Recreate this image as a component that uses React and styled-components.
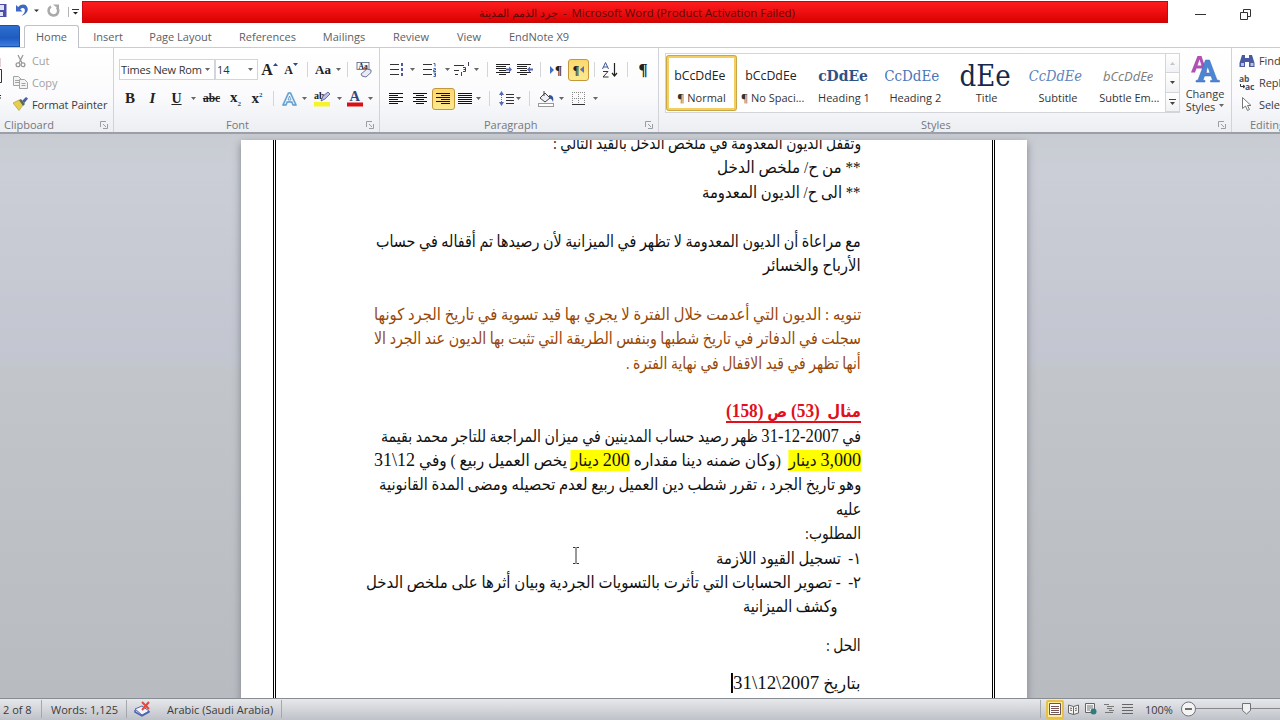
import React, { useLayoutEffect, useRef, useState } from 'react';
import styled, { createGlobalStyle, css } from 'styled-components';

const GlobalStyle = createGlobalStyle`
  * {
    box-sizing: border-box;
  }
  body {
    margin: 0;
    overflow: hidden;
    font-family: 'Open Sans', 'Noto Sans', sans-serif;
    font-size: 11px;
    color: #3b3b3b;
  }
  svg {
    display: block;
    flex: none;
  }
`;

const Window = styled.div`
  display: flex;
  flex-direction: column;
  width: 1280px;
  height: 720px;
  overflow: hidden;
  background: #fff;
`;

/* ---------- title bar ---------- */

const TitleBar = styled.div`
  display: flex;
  height: 25px;
  flex: none;
`;

const QuickAccess = styled.div`
  width: 82px;
  height: 23px;
`;

const Caption = styled.div`
  width: 1086px;
  height: 22px;
  margin-top: 1px;
  padding-left: 396px;
  border: 1px solid #c40a0a;
  border-top-color: #a51414;
  background: linear-gradient(#fb1d1d, #ee0f10 50%, #d90000);
  color: #5c0b0b;
  font-size: 11.4px;
  line-height: 22px;
  display: flex;
  gap: 5px;
  white-space: nowrap;
`;

const WindowButtons = styled.div`
  display: flex;
  align-items: center;
  gap: 34px;
  padding: 3px 0 0 27px;
`;

/* ---------- ribbon tabs ---------- */

const Tabs = styled.div`
  display: flex;
  height: 23px;
  flex: none;
  border-bottom: 1px solid #c9cdd2;
`;

const FileTab = styled.div`
  width: 20px;
  height: 22px;
  margin-right: 4px;
  border-radius: 0 3px 0 0;
  background: linear-gradient(#2e6fd0, #1f5bc0 60%, #3a7de0);
  border: 1px solid #1d51a8;
  border-left: none;
`;

const Tab = styled.div`
  width: ${(p) => p.$w}px;
  height: 23px;
  text-align: center;
  line-height: 23px;
  color: #5d6064;
  white-space: nowrap;
  ${(p) =>
    p.$active &&
    css`
      background: #fff;
      border: 1px solid #bfc3c9;
      border-bottom: none;
      border-radius: 3px 3px 0 0;
      line-height: 21px;
    `}
`;

/* ---------- ribbon ---------- */

const Ribbon = styled.div`
  display: flex;
  height: 86px;
  flex: none;
  background: linear-gradient(#fff, #fbfbfd 55%, #eceef2);
  border-bottom: 2px solid #9a9fa8;
`;

const Group = styled.div`
  width: ${(p) => p.$w}px;
  flex: none;
  display: flex;
  flex-direction: column;
  border-right: 1px solid #d0d3d8;
`;

const GroupBody = styled.div`
  height: 68px;
  padding: ${(p) => p.$pad || '0'};
  display: flex;
  flex-direction: ${(p) => (p.$row ? 'row' : 'column')};
`;

const GroupFoot = styled.div`
  display: flex;
  align-items: center;
  justify-content: space-between;
  height: 16px;
  padding: 1px 5px 0 ${(p) => p.$x}px;
  color: #74787e;
  white-space: nowrap;
`;

const ToolRow = styled.div`
  display: flex;
  align-items: center;
  height: 23px;
  margin-top: ${(p) => p.$mt || 0}px;
`;

const Cell = styled.div`
  display: flex;
  align-items: center;
  justify-content: center;
  width: ${(p) => p.$w}px;
  height: 22px;
  flex: none;
  ${(p) =>
    p.$on &&
    css`
      border: 1px solid #c2983a;
      border-radius: 3px;
      background: linear-gradient(#fbd86b, #fbe083 50%, #fdea8e);
    `}
`;

const Divider = styled.span`
  width: 1px;
  height: 15px;
  background: #d3d5d9;
`;

const Combo = styled.div`
  display: flex;
  align-items: center;
  justify-content: space-between;
  width: ${(p) => p.$w}px;
  height: 21px;
  padding: 0 4px 0 1px;
  border: 1px solid #d2d5da;
  background: #fff;
  color: #333;
  letter-spacing: -0.15px;
  white-space: nowrap;
`;

const Glyph = styled.span`
  font-family: 'Liberation Serif', serif;
  font-size: ${(p) => p.$size || 16}px;
  font-weight: ${(p) => (p.$bold ? 700 : 400)};
  font-style: ${(p) => (p.$italic ? 'italic' : 'normal')};
  text-decoration: ${(p) => p.$line || 'none'};
  line-height: 1;
  color: #222;
  white-space: nowrap;

  small {
    font-size: 7px;
    color: #2d4a86;
    vertical-align: ${(p) => p.$script || 'baseline'};
  }
`;

const Command = styled.div`
  display: flex;
  align-items: center;
  height: 21.8px;
  gap: 4px;
  letter-spacing: -0.1px;
  color: ${(p) => (p.$off ? '#a1a1a1' : '#3b3b3b')};
  white-space: nowrap;
`;

const CommandList = styled.div`
  padding-top: 2px;
`;

const PasteEdge = styled.div`
  width: 13px;
  height: 68px;
`;

/* ---------- style gallery ---------- */

const Gallery = styled.div`
  display: flex;
  width: 515px;
  height: 60px;
  border: 1px solid #d3d5da;
  background: #fff;
`;

const StyleItem = styled.div`
  display: flex;
  flex-direction: column;
  align-items: center;
  width: ${(p) => (p.$selected ? 71 : 71.4)}px;
  height: 56px;
  margin-top: 1px;
  border: 3px solid ${(p) => (p.$selected ? '#f3cf62' : 'transparent')};
  border-radius: 3px;
  outline: ${(p) => (p.$selected ? '1px solid #c9a747' : 'none')};
  outline-offset: -1px;
`;

const Sample = styled.div`
  display: flex;
  align-items: center;
  justify-content: flex-end;
  width: 54px;
  height: 34px;
  margin-right: 6px;
  padding-top: 1px;
  overflow: hidden;
  white-space: nowrap;
  line-height: 30px;
  color: ${(p) => p.$color || '#222'};
  font-family: ${(p) =>
    p.$serif ? "'DejaVu Serif Condensed', 'DejaVu Serif', serif" : "'Open Sans', sans-serif"};
  font-stretch: ${(p) => (p.$serif ? 'condensed' : 'normal')};
  font-size: ${(p) => p.$size || 12.3}px;
  font-weight: ${(p) => (p.$bold ? 700 : 400)};
  font-style: ${(p) => (p.$italic ? 'italic' : 'normal')};
`;

const SampleName = styled.div`
  line-height: 12px;
  white-space: nowrap;
  color: #333;
`;

const Scroller = styled.div`
  width: 14px;
  margin-left: auto;
  border-left: 1px solid #d3d5da;
  display: flex;
  flex-direction: column;
`;

const ScrollButton = styled.div`
  flex: 1;
  display: flex;
  align-items: center;
  justify-content: center;
  background: linear-gradient(#fff, #f1f2f4);
  border-bottom: 1px solid #d3d5da;
`;

const ChangeStyles = styled.div`
  width: 50px;
  display: flex;
  flex-direction: column;
  align-items: center;
  line-height: 13px;
  text-align: center;
  white-space: nowrap;

  svg {
    margin-bottom: 2px;
  }

  div {
    display: flex;
    align-items: center;
    gap: 4px;
  }
`;

/* ---------- document ---------- */

const Workspace = styled.div`
  position: relative;
  flex: 1;
  overflow: hidden;
  padding: 6px 0 0 241px;
  background: linear-gradient(#c8ccd2, #cbced6 6%, #c3c6d0 40%, #c2c6ca 42%, #b8bbc0);
`;

const Page = styled.div`
  width: 786px;
  height: 600px;
  padding: 0 32px;
  background: #fff;
  box-shadow: 0 3px 8px 0 #80848b;
`;

const PageBorder = styled.div`
  height: 600px;
  border-left: 3px double #000;
  border-right: 3px double #000;
  padding-right: 131px;
  overflow: hidden;
`;

const Text = styled.div`
  direction: rtl;
  margin-top: -8px;
  color: #111;
  font-family: 'Liberation Serif', 'DejaVu Sans', serif;
  font-size: 16.6px;
`;

const Line = styled.div`
  height: 24.4px;
  line-height: 24.4px;
  margin-top: ${(p) => p.$mt || 0}px;
  padding-right: ${(p) => p.$indent || 0}px;
  color: ${(p) => p.$color || 'inherit'};
  font-weight: ${(p) => (p.$bold ? 700 : 400)};
  white-space: nowrap;
`;

const Fitted = styled.span`
  display: inline-block;
  height: ${(p) => (p.$underline ? '23px' : 'auto')};
  white-space: pre;
  transform-origin: 100% 50%;
  border-bottom: ${(p) => (p.$underline ? '2px solid #e0101c' : 'none')};
`;

const Num = styled.span`
  font-size: 19.4px;
  line-height: 1;
`;

const Mark = styled.span`
  padding: 1px 0;
  background: #ffff00;
`;

const Caret = styled.span`
  display: inline-block;
  width: 2px;
  height: 20px;
  background: #000;
  vertical-align: -4px;
`;

const Pointer = styled.div`
  position: absolute;
  left: 572px;
  top: 413px;
`;

/* ---------- status bar ---------- */

const StatusBar = styled.div`
  display: flex;
  align-items: center;
  height: 22px;
  flex: none;
  padding-bottom: 1px;
  border-top: 1px solid #888c93;
  background: linear-gradient(#e6e8eb, #d3d5da 50%, #bfc2c8);
  white-space: nowrap;
`;

const StatusItem = styled.div`
  display: flex;
  align-items: center;
  width: ${(p) => p.$w}px;
  height: 18px;
  padding-left: ${(p) => p.$pl || 0}px;
  flex: none;
  border-right: ${(p) => (p.$edge ? '1px solid #a4a8ae' : 'none')};
`;

const ViewButton = styled.div`
  display: flex;
  align-items: center;
  justify-content: center;
  width: 18px;
  height: 19px;
  flex: none;
  ${(p) =>
    p.$on &&
    css`
      background: #fdeb9c;
      border: 2px solid #e5c04a;
      border-radius: 2px;
    `}
`;

const Arrow = ({ color = '#666' }) => (
  <svg width="5" height="3" viewBox="0 0 5 3">
    <path d="M0 0h5L2.5 3z" fill={color} />
  </svg>
);

const Launcher = () => (
  <svg width="8" height="8" viewBox="0 0 8 8" fill="none" stroke="#9a9da3">
    <path d="M.5 6V.5H6M3 3l3 3M7.5 3v4.5H3" />
  </svg>
);

const Sep = ({ w }) => (
  <Cell $w={w}>
    <Divider />
  </Cell>
);

const Drop = ({ w }) => (
  <Cell $w={w}>
    <Arrow />
  </Cell>
);

// horizontal text lines; each entry is [x, width]
const Bars = ({ rows, w = 15, step = 2, color = '#111' }) => (
  <svg width={w} height={rows.length * step} viewBox={`0 0 ${w} ${rows.length * step}`}>
    {rows.map(([x, len], i) => (
      <rect key={i} x={x} y={i * step} width={len} height="1" fill={color} />
    ))}
  </svg>
);

const LEFT = [[0, 14], [0, 9], [0, 14], [0, 9], [0, 14], [0, 9]];
const CENTER = [[0, 14], [3, 8], [0, 14], [3, 8], [0, 14], [3, 8]];
const RIGHT = [[0, 14], [5, 9], [0, 14], [5, 9], [0, 14], [5, 9]];
const FULL = [[0, 14], [0, 14], [0, 14], [0, 14], [0, 14], [0, 14]];

const Indent = ({ flip }) => (
  <svg width="16" height="12" viewBox="0 0 16 12">
    <path d="M0 .5h14M0 2.5h9M0 4.5h9M3 6.5h6M0 8.5h14M3 10.5h6" stroke="#222" />
    <path d="M9.5 0v12" stroke="#222" strokeDasharray="1 1" />
    <path d={flip ? 'M10 5.5l3-3v2h3v2h-3v2z' : 'M16 5.5l-3-3v2h-3v2h3v2z'} fill="#5b66b5" />
  </svg>
);

function FitText({ width, children, ...rest }) {
  const ref = useRef(null);
  const [scale, setScale] = useState(1);

  useLayoutEffect(() => {
    setScale(width / ref.current.offsetWidth);
  }, [width]);

  return (
    <Fitted ref={ref} style={{ transform: `scaleX(${scale})` }} {...rest}>
      {children}
    </Fitted>
  );
}

const BROWN = '#974706';

const lines = [
  { w: 308, text: 'وتقفل الديون المعدومة في ملخص الدخل بالقيد التالي :' },
  { w: 144, text: '** من ح/ ملخص الدخل' },
  { w: 159, text: '** الى ح/ الديون المعدومة' },
  {},
  { w: 485, text: 'مع مراعاة أن الديون المعدومة لا تظهر في الميزانية لأن رصيدها تم أقفاله في حساب' },
  { w: 98, text: 'الأرباح والخسائر' },
  {},
  { w: 487, color: BROWN, text: 'تنويه : الديون التي أعدمت خلال الفترة لا يجري بها قيد تسوية في تاريخ الجرد كونها' },
  { w: 487, color: BROWN, text: 'سجلت في الدفاتر في تاريخ شطبها وبنفس الطريقة التي تثبت بها الديون عند الجرد الا' },
  { w: 235, color: BROWN, text: 'أنها تظهر في قيد الاقفال في نهاية الفترة .' },
  {},
  {
    w: 135,
    color: '#e0101c',
    bold: true,
    underline: true,
    text: (
      <>
        {'مثال  '}
        <Num>(53)</Num>
        {' ص '}
        <Num>(158)</Num>
      </>
    ),
  },
  {
    w: 480,
    text: (
      <>
        {'في '}
        <Num>2007-12-31</Num>
        {' ظهر رصيد حساب المدينين في ميزان المراجعة للتاجر محمد بقيمة'}
      </>
    ),
  },
  {
    w: 487,
    text: (
      <>
        <Mark>
          <Num>3,000</Num> دينار
        </Mark>
        {'  (وكان ضمنه دينا مقداره '}
        <Mark>
          <Num>200</Num> دينار
        </Mark>
        {' يخص العميل ربيع ) وفي '}
        <Num>{'12\\31'}</Num>
      </>
    ),
  },
  { w: 482, text: 'وهو تاريخ الجرد ، تقرر شطب دين العميل ربيع لعدم تحصيله ومضى المدة القانونية' },
  { w: 25, text: 'عليه' },
  { w: 56, text: 'المطلوب:' },
  { w: 145, text: '١-  تسجيل القيود اللازمة' },
  { w: 495, text: '٢-  - تصوير الحسابات التي تأثرت بالتسويات الجردية وبيان أثرها على ملخص الدخل' },
  { w: 95, indent: 23, text: 'وكشف الميزانية' },
  { w: 35, mt: 14, text: 'الحل :' },
  {
    w: 130,
    mt: 14,
    text: (
      <>
        {'بتاريخ '}
        <Num>{'2007\\12\\31'}</Num>
        <Caret />
      </>
    ),
  },
];

const tabs = [
  ['Home', 55],
  ['Insert', 58],
  ['Page Layout', 87],
  ['References', 87],
  ['Mailings', 66],
  ['Review', 68],
  ['View', 48],
  ['EndNote X9', 92],
];

const styles = [
  { name: '¶ Normal', sample: 'bCcDdEe', selected: true },
  { name: '¶ No Spaci...', sample: 'bCcDdEe' },
  { name: 'Heading 1', sample: 'cDdEe', serif: true, bold: true, color: '#2f5284', size: 15.5 },
  { name: 'Heading 2', sample: 'CcDdEe', serif: true, color: '#4a76b8', size: 15 },
  { name: 'Title', sample: 'dEe', serif: true, color: '#14294b', size: 29 },
  { name: 'Subtitle', sample: 'CcDdEe', serif: true, italic: true, color: '#5d84bd', size: 14.5 },
  { name: 'Subtle Em...', sample: 'bCcDdEe', italic: true, color: '#7c7c7c', size: 13 },
];

function ClipboardGroup() {
  return (
    <Group $w={114}>
      <GroupBody $row>
        <PasteEdge>
          <svg width="13" height="68" viewBox="0 0 13 68">
            <path d="M0 10v9" stroke="#c9a5a5" />
            <path d="M0 21.5h1.5v13H0" fill="none" stroke="#334" />
            <path d="M0 47.5h1M0 50h1" stroke="#222" />
          </svg>
        </PasteEdge>
        <CommandList>
          <Command $off>
            <svg width="15" height="14" viewBox="0 0 15 14" fill="none" stroke="#9a9a9a" strokeWidth="1.3">
              <path d="M5 1l4 8M10 1L6 9" />
              <circle cx="5" cy="10.8" r="1.9" />
              <circle cx="10" cy="10.8" r="1.9" />
            </svg>
            Cut
          </Command>
          <Command $off>
            <svg width="15" height="13" viewBox="0 0 15 13" fill="#f4f4f4" stroke="#a3a3a3">
              <path d="M.5.5h5l3 3v6h-8z" />
              <path d="M2 4.5h4M2 6.5h4" />
              <path d="M6.5 3.5h5l3 3v6h-8z" />
              <path d="M8.5 7.5h4M8.5 9.5h4" />
            </svg>
            Copy
          </Command>
          <Command>
            <svg width="15" height="14" viewBox="0 0 15 14">
              <path d="M0 6l6-3 4 5-4 5.5z" fill="#e6cf4c" stroke="#a5913b" strokeWidth=".6" />
              <path d="M6 3l2-1 4 5-2 2z" fill="#5d6e50" />
              <path d="M9 4l4-4 2 1.5L11.5 6z" fill="#4b5fa0" />
            </svg>
            Format Painter
          </Command>
        </CommandList>
      </GroupBody>
      <GroupFoot $x={4}>
        Clipboard
        <Launcher />
      </GroupFoot>
    </Group>
  );
}

function FontGroup() {
  return (
    <Group $w={266}>
      <GroupBody $pad="10px 0 0 5px">
        <ToolRow>
          <Combo $w={96}>
            Times New Rom <Arrow />
          </Combo>
          <Combo $w={43}>
            14 <Arrow />
          </Combo>
          <Cell $w={23}>
            <Glyph $bold $size={16}>A</Glyph>
            <svg width="5" height="14" viewBox="0 0 5 14"><path d="M0 3h5L2.5 0z" fill="#2f478a" /></svg>
          </Cell>
          <Cell $w={20}>
            <Glyph $bold $size={12}>A</Glyph>
            <svg width="5" height="14" viewBox="0 0 5 14"><path d="M0 0h5L2.5 3z" fill="#2f478a" /></svg>
          </Cell>
          <Sep w={12} />
          <Cell $w={20}>
            <Glyph $bold $size={13}>Aa</Glyph>
          </Cell>
          <Drop w={10} />
          <Sep w={8} />
          <Cell $w={26}>
            <svg width="17" height="16" viewBox="0 0 17 16">
              <rect x="1" y=".5" width="12" height="7" fill="#fff" stroke="#55607c" strokeWidth=".8" />
              <text x="2.5" y="6.8" fontSize="7.5" fontWeight="700" fontFamily="Liberation Serif" fill="#223">Aa</text>
              <path d="M5 12l6-5 4 1v2.500l-5 4.500-4-1z" fill="#e8ebf6" stroke="#5b678c" strokeWidth=".9" />
            </svg>
          </Cell>
        </ToolRow>
        <ToolRow $mt={6}>
          <Cell $w={22}><Glyph $bold $size={15}>B</Glyph></Cell>
          <Cell $w={23}><Glyph $bold $italic $size={15}>I</Glyph></Cell>
          <Cell $w={25}><Glyph $bold $size={14} $line="underline">U</Glyph></Cell>
          <Drop w={8} />
          <Cell $w={29}><Glyph $bold $size={11.5} $line="line-through">abc</Glyph></Cell>
          <Cell $w={19}><Glyph $bold $size={15} $script="sub">x<small>2</small></Glyph></Cell>
          <Cell $w={24}><Glyph $bold $size={15} $script="super">x<small>2</small></Glyph></Cell>
          <Sep w={9} />
          <Cell $w={23}>
            <svg width="15" height="14" viewBox="0 0 15 14" fill="none">
              <path d="M1 13L6.5 1h2L14 13h-3l-1.2-3H5.2L4 13z" stroke="#9cc8ea" strokeWidth="2" />
              <path d="M1 13L6.5 1h2L14 13h-3l-1.2-3H5.2L4 13zM6 8h3L7.5 4z" stroke="#4384bd" strokeWidth=".7" />
            </svg>
          </Cell>
          <Drop w={6} />
          <Cell $w={30}>
            <svg width="17" height="16" viewBox="0 0 17 16">
              <rect x="0" y="11" width="16" height="4.5" fill="#f7f32a" />
              <text x="0" y="8" fontSize="10" fontWeight="700" fontFamily="Liberation Serif" fill="#222">ab</text>
              <path d="M7 10l2-5 5-4 2 2-5 5z" fill="#b9c2e2" stroke="#46549a" strokeWidth=".8" />
            </svg>
          </Cell>
          <Drop w={5} />
          <Cell $w={25}>
            <svg width="16" height="16" viewBox="0 0 16 16">
              <rect x="0" y="11.5" width="16" height="4" fill="#dc0f14" />
              <text x="2.5" y="10.3" fontSize="14.5" fontWeight="700" fontFamily="Liberation Serif" fill="#31487d">A</text>
            </svg>
          </Cell>
          <Drop w={6} />
        </ToolRow>
      </GroupBody>
      <GroupFoot $x={112}>
        Font
        <Launcher />
      </GroupFoot>
    </Group>
  );
}

function ParagraphGroup() {
  return (
    <Group $w={279}>
      <GroupBody $pad="10px 0 0 4px">
        <ToolRow>
          <Cell $w={25}>
            <svg width="14" height="13" viewBox="0 0 14 13">
              <path d="M0 1.5h9M0 6.5h9M0 11.5h9" stroke="#333" />
              <path d="M11 0h2v3h-2zM11 5h2v3h-2zM11 10h2v3h-2z" fill="#4a5c9c" />
            </svg>
          </Cell>
          <Drop w={7} />
          <Cell $w={28}>
            <svg width="14" height="14" viewBox="0 0 14 14" fill="none">
              <path d="M0 1.5h9M0 6.5h9M0 11.5h9" stroke="#333" />
              <path d="M10.5 .5h1.500v3M10.500 5.500h2v1.500h-2v1.500h2.500M10.500 10h2v3.500h-2M11 11.700h1.500" stroke="#3d62ad" />
            </svg>
          </Cell>
          <Drop w={7} />
          <Cell $w={22}>
            <svg width="16" height="15" viewBox="0 0 16 15" fill="none">
              <path d="M0 3.5h10M0 8.5h5M1 12.5h3" stroke="#333" />
              <path d="M14.5 0v4M9 5.500h2.500v4H9M11.500 7.500H9.500M7.500 10v4" stroke="#33426f" />
            </svg>
          </Cell>
          <Drop w={7} />
          <Sep w={14} />
          <Cell $w={19}><Indent /></Cell>
          <Cell $w={23}><Indent flip /></Cell>
          <Sep w={8} />
          <Cell $w={24}>
            <svg width="5" height="8" viewBox="0 0 5 8"><path d="M0 0l4 4-4 4z" fill="#3e6fc0" /></svg>
            <Glyph $bold $size={13}>¶</Glyph>
          </Cell>
          <Cell $w={21} $on>
            <Glyph $bold $size={12}>¶</Glyph>
            <svg width="5" height="7" viewBox="0 0 5 7"><path d="M5 0L1 3.5 5 7z" fill="#5a6cc0" /></svg>
          </Cell>
          <Sep w={10} />
          <Cell $w={22}>
            <svg width="16" height="16" viewBox="0 0 16 16">
              <path d="M.5 7L3.500 .5 6.500 7M1.500 5h4" fill="none" stroke="#3e5596" />
              <path d="M1 9.500h5l-5 5.500h5.500" fill="none" stroke="#333" />
              <path d="M12.5 1v13M10 11l2.5 3 2.5-3" fill="none" stroke="#222" strokeWidth="1.2" />
            </svg>
          </Cell>
          <Sep w={12} />
          <Cell $w={20}><Glyph $bold $size={17}>¶</Glyph></Cell>
        </ToolRow>
        <ToolRow $mt={6}>
          <Cell $w={24}><Bars rows={LEFT} /></Cell>
          <Cell $w={24}><Bars rows={CENTER} /></Cell>
          <Cell $w={23} $on><Bars rows={RIGHT} /></Cell>
          <Cell $w={21}><Bars rows={FULL} /></Cell>
          <Drop w={5} />
          <Sep w={16} />
          <Cell $w={18}>
            <svg width="15" height="15" viewBox="0 0 15 15">
              <path d="M0 4l2.5-4L5 4zM0 11l2.5 4L5 11z" fill="#5967b4" />
              <path d="M2.5 4v7" stroke="#5967b4" strokeDasharray="1 1" />
              <path d="M7 3.5h8M7 6.5h8M7 9.5h8M7 12.5h8" stroke="#333" />
            </svg>
          </Cell>
          <Drop w={7} />
          <Sep w={14} />
          <Cell $w={21}>
            <svg width="17" height="16" viewBox="0 0 17 16">
              <rect x=".5" y="12.5" width="15" height="3" fill="#fff" stroke="#999" />
              <path d="M2 7l5-5 5 5-5 4z" fill="#eef1f8" stroke="#444" />
              <path d="M6 0v5" stroke="#444" />
              <path d="M11 4c4 0 5 3 4 7-1-3-2-3-4-4z" fill="#34529c" />
            </svg>
          </Cell>
          <Drop w={8} />
          <Cell $w={28}>
            <svg width="14" height="14" viewBox="0 0 14 14" fill="none" stroke="#888">
              <path d="M.5 0v13M6.5 0v13M12.5 0v13M0 .5h13M0 6.5h13" strokeDasharray="1 1" />
              <path d="M0 12.5h13" stroke="#333" />
            </svg>
          </Cell>
          <Drop w={4} />
        </ToolRow>
      </GroupBody>
      <GroupFoot $x={104}>
        Paragraph
        <Launcher />
      </GroupFoot>
    </Group>
  );
}

function StylesGroup() {
  return (
    <Group $w={573}>
      <GroupBody $row $pad="5px 0 0 6px">
        <Gallery>
          {styles.map((s) => (
            <StyleItem key={s.name} $selected={s.selected}>
              <Sample $serif={s.serif} $bold={s.bold} $italic={s.italic} $color={s.color} $size={s.size}>
                {s.sample}
              </Sample>
              <SampleName>{s.name}</SampleName>
            </StyleItem>
          ))}
          <Scroller>
            <ScrollButton>
              <svg width="5" height="3" viewBox="0 0 5 3"><path d="M0 3h5L2.5 0z" fill="#c4c6ca" /></svg>
            </ScrollButton>
            <ScrollButton><Arrow color="#444" /></ScrollButton>
            <ScrollButton>
              <svg width="7" height="6" viewBox="0 0 7 6"><path d="M0 0h7v1H0zM1 3h5L3.5 6z" fill="#444" /></svg>
            </ScrollButton>
          </Scroller>
        </Gallery>
        <ChangeStyles>
          <svg width="30" height="32" viewBox="0 0 30 32">
            <path d="M1 19.500L7.500 3h4L17 19.500h-3.500l-1.200-4H6.500L5 19.500zM7.500 12.500h4l-2-6z" fill="#b14fb5" />
            <path d="M6 29v-1.500l2-.5L15.500 7h4L27 27l2.500.5V29h-9v-1.500l2-.5-1.500-4h-6.500L13 27l2 .5V29zM15.500 20h4.500l-2.200-6.500z" fill="#4a86d4" stroke="#3a69b0" strokeWidth=".5" />
          </svg>
          Change
          <div>
            Styles <Arrow />
          </div>
        </ChangeStyles>
      </GroupBody>
      <GroupFoot $x={262}>
        Styles
        <Launcher />
      </GroupFoot>
    </Group>
  );
}

function EditingGroup() {
  return (
    <Group $w={90}>
      <GroupBody $pad="2px 0 0 7px">
        <Command>
          <svg width="16" height="14" viewBox="0 0 16 14">
            <path d="M3 1h3v3h4V1h3l2.500 8v4H10V8H6v5H.5V9z" fill="#4b59a0" />
            <path d="M2 9h3v3H2zM11.500 9h3v3h-3z" fill="#b5bfe8" />
          </svg>
          Find
        </Command>
        <Command>
          <svg width="16" height="15" viewBox="0 0 16 15">
            <text x="0" y="6.500" fontSize="8.500" fontWeight="700" fontFamily="Open Sans" fill="#555">ab</text>
            <text x="6" y="14.500" fontSize="8.500" fontWeight="700" fontFamily="Open Sans" fill="#33507a">ac</text>
            <path d="M1.500 9v2.500h4M4 10l2 1.500L4 13" fill="none" stroke="#333" />
          </svg>
          Replace
        </Command>
        <Command>
          <svg width="16" height="14" viewBox="0 0 16 14">
            <path d="M3.500 .5v11l3-2.500 2 4.500 2-1-2-4h3.500z" fill="#fff" stroke="#777" />
          </svg>
          Select
        </Command>
      </GroupBody>
      <GroupFoot $x={18}>Editing</GroupFoot>
    </Group>
  );
}

function App() {
  return (
    <Window>
      <GlobalStyle />
      <TitleBar>
        <QuickAccess>
          <svg width="82" height="23" viewBox="0 0 82 23">
            <path d="M0 4h6.500v13H0z" fill="#4a4fa8" />
            <path d="M0 5h4v5H0zM0 12h3v4H0z" fill="#dfe3f5" />
            <path d="M16 5v6.500h6.500l-2.300-2.300c3-2.500 5.500-.5 4.500 2.500-.5 1.800-2 3-3 4.300 4-1.500 6.500-4.500 6-7.500-.6-4.300-5.500-5.800-9.500-1.600z" fill="#3f68c4" />
            <path d="M34 9.500h5L36.500 12z" fill="#333" />
            <path d="M51 6.500c-3.500 2-3.500 8 2 9 5 .3 6.500-5 4-8" fill="none" stroke="#aaa" strokeWidth="2.500" />
            <path d="M53 4.500h6v5z" fill="#aaa" />
            <path d="M68.500 7v10" stroke="#b5b5b5" />
            <path d="M72 9.500h7" stroke="#333" />
            <path d="M73 12h5L75.500 14.500z" fill="#222" />
          </svg>
        </QuickAccess>
        <Caption>
          <span dir="rtl">جرد الذمم المدينة</span>
          <span>-</span>
          <span>Microsoft Word (Product Activation Failed)</span>
        </Caption>
        <WindowButtons>
          <svg width="11" height="11" viewBox="0 0 11 11"><path d="M0 5.5h11" stroke="#333" /></svg>
          <svg width="11" height="11" viewBox="0 0 11 11" fill="none" stroke="#333">
            <path d="M.5 3.5h7v7h-7zM3.5 3.500v-3h7v7h-3" />
          </svg>
        </WindowButtons>
      </TitleBar>
      <Tabs>
        <FileTab />
        {tabs.map(([label, w], i) => (
          <Tab key={label} $w={w} $active={i === 0}>
            {label}
          </Tab>
        ))}
      </Tabs>
      <Ribbon>
        <ClipboardGroup />
        <FontGroup />
        <ParagraphGroup />
        <StylesGroup />
        <EditingGroup />
      </Ribbon>
      <Workspace>
        <Page>
          <PageBorder>
            <Text>
              {lines.map((l, i) => (
                <Line key={i} $mt={l.mt} $indent={l.indent} $color={l.color} $bold={l.bold}>
                  {l.text && (
                    <FitText width={l.w} $underline={l.underline}>
                      {l.text}
                    </FitText>
                  )}
                </Line>
              ))}
            </Text>
          </PageBorder>
        </Page>
        <Pointer>
          <svg width="8" height="17" viewBox="0 0 8 17" fill="none" stroke="#333">
            <path d="M1 .5h2.500M4.500 .5H7M4 1v15M1 16.500h2.500M4.500 16.500H7" />
          </svg>
        </Pointer>
      </Workspace>
      <StatusBar>
        <StatusItem $w={42} $pl={3} $edge>2 of 8</StatusItem>
        <StatusItem $w={85} $pl={9} $edge>Words: 1,125</StatusItem>
        <StatusItem $w={40} $pl={7}>
          <svg width="17" height="16" viewBox="0 0 17 16">
            <path d="M1 8l7-3 7 5-7 4z" fill="#f2f4fb" stroke="#5868a8" />
            <path d="M1 9v2l7 4 7-4v-1" fill="none" stroke="#4a63b5" strokeWidth="1.5" />
            <path d="M8 1l7 7M15 1L8 9" stroke="#e3483c" strokeWidth="2" />
          </svg>
        </StatusItem>
        <StatusItem $w={115} $edge>Arabic (Saudi Arabia)</StatusItem>
        <StatusItem $w={759} $edge />
        <StatusItem $w={5} />
        <ViewButton $on>
          <svg width="12" height="12" viewBox="0 0 12 12"><path d="M.5.5h11v11H.5z" fill="#fff" stroke="#655" /><path d="M2 3.5h8M2 5.5h8M2 7.5h8M2 9.5h8" stroke="#755" /></svg>
        </ViewButton>
        <ViewButton>
          <svg width="11" height="11" viewBox="0 0 11 11" fill="#f4f4f4" stroke="#666"><path d="M.5 1l5 1.500 5-1.500v8l-5 1.500-5-1.500zM5.500 2.500v8M2 4l2 .5M2 6l2 .5M7 4.500L9 4M7 6.500L9 6" /></svg>
        </ViewButton>
        <ViewButton>
          <svg width="12" height="12" viewBox="0 0 12 12"><path d="M.5.5h9v9h-9z" fill="#f4f4f4" stroke="#666" /><path d="M2 3h6M2 5h6M2 7h3" stroke="#777" /><circle cx="8.500" cy="8.500" r="3" fill="#2f7d7a" /></svg>
        </ViewButton>
        <ViewButton>
          <svg width="10" height="10" viewBox="0 0 10 10"><path d="M0 .5h5M3 2.500h7M3 4.500h5M5 6.500h5M1 8.500h8" stroke="#777" /></svg>
        </ViewButton>
        <ViewButton>
          <svg width="11" height="10" viewBox="0 0 11 10"><path d="M0 .5h11M0 3.5h11M0 6.5h11M0 9.5h11" stroke="#666" /></svg>
        </ViewButton>
        <StatusItem $w={44} $pl={9}>100%</StatusItem>
        <svg width="100" height="18" viewBox="0 0 100 18">
          <path d="M16 8.5h84" stroke="#85898f" />
          <circle cx="8.5" cy="9" r="7" fill="#f4f4f5" stroke="#6f7378" />
          <path d="M5 9h7" stroke="#444" strokeWidth="1.5" />
          <path d="M62.500 3.500h8v7l-4 3.500-4-3.500z" fill="#f0f0f1" stroke="#6f7378" />
        </svg>
      </StatusBar>
    </Window>
  );
}

export default App;
